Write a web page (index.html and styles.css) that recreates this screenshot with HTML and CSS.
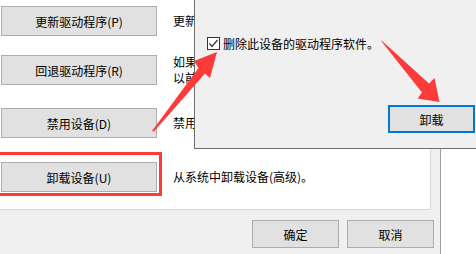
FILE: index.html
```html
<!DOCTYPE html>
<html lang="zh-CN">
<head>
<meta charset="utf-8">
<title>驱动程序</title>
<link rel="stylesheet" href="styles.css">
</head>
<body>
<div class="window">
  <div class="panel">
    <div class="row row-1">
      <button class="btn act">更新驱动程序(P)</button>
      <div class="desc">更新此设备的驱动程序。</div>
    </div>
    <div class="row row-2">
      <button class="btn act">回退驱动程序(R)</button>
      <div class="desc">如果该设备在更新驱动程序时失败，则回退到<br>以前安装的驱动程序。</div>
    </div>
    <div class="row row-3">
      <button class="btn act">禁用设备(D)</button>
      <div class="desc">禁用此设备。</div>
    </div>
    <div class="row row-4">
      <div class="highlight"></div>
      <button class="btn act">卸载设备(U)</button>
      <div class="desc">从系统中卸载设备(高级)。</div>
    </div>
  </div>
  <div class="footer">
    <button class="btn foot">确定</button>
    <button class="btn foot">取消</button>
  </div>
</div>

<div class="dialog">
  <label class="check-row">
    <span class="checkbox">
      <svg width="11" height="11" viewBox="0 0 11 11"><polyline points="1.5,5.5 4,8.5 9.5,2" fill="none" stroke="#333" stroke-width="1.2"/></svg>
    </span>
    <span class="check-label">删除此设备的驱动程序软件。</span>
  </label>
  <button class="btn primary">卸载</button>
</div>

<svg class="annotations" width="476" height="254" viewBox="0 0 476 254">
  <polygon fill="#fe3b3b" points="152,131 198.5,68 194,61 217,52 210,78 205,73.5 154,131.5"/>
  <polygon fill="#fe3b3b" points="381,40 429,83.5 434.5,78 439.5,102 417.5,98.5 422,92.5 382,42"/>
</svg>
</body>
</html>
```

FILE: styles.css
```css
* { box-sizing: border-box; }

html, body {
  margin: 0;
  padding: 0;
}

body {
  width: 476px;
  height: 254px;
  overflow: hidden;
  background: #ffffff;
  position: relative;
  font-family: "Noto Sans CJK SC", "Noto Sans", sans-serif;
  font-size: 12px;
  color: #000;
}

.window {
  width: 441px;
  height: 254px;
  background: #f0f0f0;
  border-right: 1px solid #a0a0a0;
  display: flex;
  flex-direction: column;
}

.panel {
  width: 431px;
  height: 210px;
  background: #ffffff;
  border-right: 1px solid #dadada;
  border-bottom: 1px solid #dadada;
  padding: 6px 0 0 1px;
  display: flex;
  flex-direction: column;
}

.row {
  position: relative;
  display: flex;
  align-items: center;
  height: 30px;
  gap: 16px;
}

.row-2 { margin-top: 19px; }
.row-3 { margin-top: 23px; }
.row-4 { margin-top: 24px; }

.btn {
  font-family: "Noto Sans CJK SC", "Noto Sans", sans-serif;
  font-size: 12px;
  color: #000;
  background: #e1e1e1;
  border: 1px solid #adadad;
  padding: 0;
  margin: 0;
  display: flex;
  align-items: center;
  justify-content: center;
  flex-shrink: 0;
}

.act {
  width: 156px;
  height: 30px;
}

.desc {
  line-height: 16px;
  white-space: nowrap;
}

.highlight {
  position: absolute;
  left: -4px;
  top: -10px;
  width: 165px;
  height: 44px;
  border: 3px solid #fe3b3b;
}

.footer {
  flex: 1;
  display: flex;
  justify-content: flex-end;
  align-items: flex-start;
  gap: 8px;
  padding: 10px 6px 0 0;
}

.foot {
  width: 87px;
  height: 28px;
}

.dialog {
  position: absolute;
  left: 194px;
  top: 0;
  width: 282px;
  height: 149px;
  background: #f0f0f0;
  border-left: 1px solid #6f6f6f;
  border-bottom: 1px solid #6f6f6f;
  padding: 37px 1px 0 12px;
  display: flex;
  flex-direction: column;
}

.check-row {
  display: flex;
  align-items: center;
  height: 13px;
  gap: 3px;
}

.checkbox {
  width: 13px;
  height: 13px;
  border: 1px solid #333;
  background: #fff;
  display: flex;
  align-items: center;
  justify-content: center;
  flex-shrink: 0;
}

.check-label {
  line-height: 13px;
  white-space: nowrap;
}

.primary {
  align-self: flex-end;
  margin-top: 55px;
  width: 87px;
  height: 28px;
  border: 2px solid #0078d7;
}

.annotations {
  position: absolute;
  left: 0;
  top: 0;
  pointer-events: none;
}
```
